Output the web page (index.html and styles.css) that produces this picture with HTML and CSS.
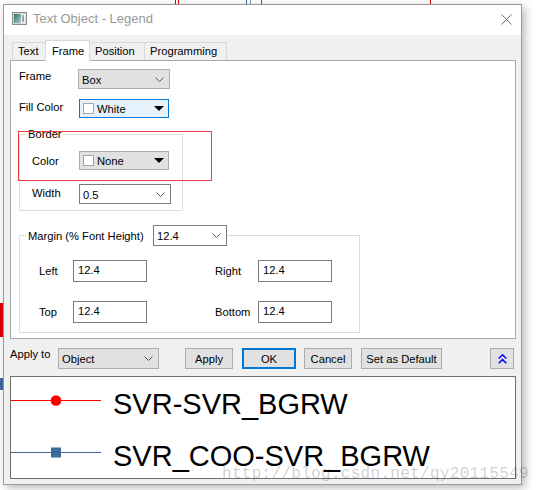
FILE: index.html
```html
<!DOCTYPE html>
<html>
<head>
<meta charset="utf-8">
<link rel="stylesheet" href="styles.css">
</head>
<body>
<div class="bgmark bg-red-left"></div>
<div class="bgmark bg-blue-left"></div>
<div class="bgmark bg-top-red1"></div>
<div class="bgmark bg-top-red2"></div>
<div class="bgmark bg-top-blue1"></div>
<div class="bgmark bg-top-gray"></div>
<div class="bgmark bg-top-blue2"></div>
<div class="bgmark bg-top-red3"></div>

<div class="window">
  <div class="titlebar">
    <svg class="app-icon" width="15" height="13" viewBox="0 0 15 13">
      <defs>
        <linearGradient id="ig" x1="0" y1="0" x2="1" y2="1">
          <stop offset="0" stop-color="#2f6f73"/>
          <stop offset="1" stop-color="#a6d3c2"/>
        </linearGradient>
      </defs>
      <rect x="0.5" y="0.5" width="14" height="12" fill="#d6d6d6" stroke="#8d8d8d"/>
      <rect x="2" y="2" width="7" height="9" fill="url(#ig)"/>
      <rect x="9" y="2" width="4" height="9" fill="#f6f6f6"/>
      <rect x="10.5" y="3" width="1" height="7" fill="#44515e"/>
    </svg>
    <span class="title">Text Object - Legend</span>
    <svg class="close" width="11" height="11" viewBox="0 0 11 11">
      <path d="M0.5 0.5 L10.5 10.5 M10.5 0.5 L0.5 10.5" stroke="#6f6f6f" stroke-width="1" fill="none"/>
    </svg>
  </div>

  <div class="body">
    <div class="tabs">
      <div class="tab tab-text">Text</div>
      <div class="tab tab-frame active">Frame</div>
      <div class="tab tab-pos">Position</div>
      <div class="tab tab-prog">Programming</div>
    </div>

    <div class="panel">
      <div class="row r-frame">
        <span class="lbl">Frame</span>
        <div class="combo gray c-frame">
          <span class="val">Box</span>
          <svg class="chev" width="9" height="5" viewBox="0 0 9 5"><path d="M0.5 0.5 L4.5 4.5 L8.5 0.5" stroke="#5a5a5a" fill="none"/></svg>
        </div>
      </div>

      <div class="row r-fill">
        <span class="lbl">Fill Color</span>
        <div class="combo focus c-color">
          <span class="swatch"></span>
          <span class="val">White</span>
          <svg class="tri" width="10" height="5" viewBox="0 0 10 5"><path d="M0 0 L10 0 L5 5 Z" fill="#000"/></svg>
        </div>
      </div>

      <fieldset class="group g-border">
        <legend>Border</legend>
        <div class="ginner">
          <div class="row r-color">
            <span class="lbl">Color</span>
            <div class="combo gray c-color">
              <span class="swatch"></span>
              <span class="val">None</span>
              <svg class="tri" width="10" height="5" viewBox="0 0 10 5"><path d="M0 0 L10 0 L5 5 Z" fill="#000"/></svg>
            </div>
          </div>
          <div class="row r-width">
            <span class="lbl">Width</span>
            <div class="combo white c-width">
              <span class="val">0.5</span>
              <svg class="chev" width="9" height="5" viewBox="0 0 9 5"><path d="M0.5 0.5 L4.5 4.5 L8.5 0.5" stroke="#5a5a5a" fill="none"/></svg>
            </div>
          </div>
        </div>
      </fieldset>

      <fieldset class="group g-margin">
        <legend>
          <span class="leg-text">Margin (% Font Height)</span>
          <div class="combo white c-marg">
            <span class="val">12.4</span>
            <svg class="chev" width="9" height="5" viewBox="0 0 9 5"><path d="M0.5 0.5 L4.5 4.5 L8.5 0.5" stroke="#5a5a5a" fill="none"/></svg>
          </div>
        </legend>
        <div class="mgrid">
          <span class="lbl">Left</span>
          <div class="edit">12.4</div>
          <span class="spacer"></span>
          <span class="lbl">Right</span>
          <div class="edit">12.4</div>
          <span class="lbl">Top</span>
          <div class="edit">12.4</div>
          <span class="spacer"></span>
          <span class="lbl">Bottom</span>
          <div class="edit">12.4</div>
        </div>
      </fieldset>
    </div>

    <div class="actions">
      <span class="lbl apply-lbl">Apply to</span>
      <div class="combo gray c-object">
        <span class="val">Object</span>
        <svg class="chev" width="9" height="5" viewBox="0 0 9 5"><path d="M0.5 0.5 L4.5 4.5 L8.5 0.5" stroke="#5a5a5a" fill="none"/></svg>
      </div>
      <div class="btn b-apply">Apply</div>
      <div class="btn b-ok">OK</div>
      <div class="btn b-cancel">Cancel</div>
      <div class="btn b-default">Set as Default</div>
      <div class="btn b-collapse">
        <svg width="9" height="10" viewBox="0 0 9 10"><path d="M0.7 4.5 L4.5 0.8 L8.3 4.5 M0.7 9.3 L4.5 5.6 L8.3 9.3" stroke="#0000ff" stroke-width="1.5" fill="none"/></svg>
      </div>
    </div>

    <div class="legend-box">
      <div class="lrow">
        <svg class="sym" width="90" height="32" viewBox="0 0 90 32">
          <line x1="0" y1="12.5" x2="90" y2="12.5" stroke="#ff0000" stroke-width="1.2"/>
          <circle cx="45" cy="12.5" r="5.3" fill="#ff0000"/>
        </svg>
        <span class="ltext">SVR-SVR_BGRW</span>
      </div>
      <div class="lrow lrow2">
        <svg class="sym" width="90" height="32" viewBox="0 0 90 32">
          <line x1="0" y1="12.5" x2="90" y2="12.5" stroke="#3d6a9c" stroke-width="1.2"/>
          <rect x="40" y="7.5" width="10" height="10" fill="#3d6a9c"/>
        </svg>
        <span class="ltext">SVR_COO-SVR_BGRW</span>
      </div>
    </div>
  </div>

  <div class="annot"></div>
  <div class="watermark">http://blog.csdn.net/qy20115549</div>
</div>
</body>
</html>
```

FILE: styles.css
```css
html, body {
  margin: 0;
}
body {
  position: relative;
  box-sizing: border-box;
  width: 541px;
  height: 490px;
  padding: 4px 0 0 3px;
  overflow: hidden;
  background: #ffffff;
  font-family: "Liberation Sans", Arial, sans-serif;
  font-size: 11.2px;
  color: #000;
}

/* bits of the plot window behind the dialog */
.bgmark { position: absolute; }
.bg-red-left { left: 0; top: 303px; width: 3px; height: 34px; background: #e60000; }
.bg-blue-left { left: 0; top: 378px; width: 3px; height: 12px; background: #3d6a9c; }
.bg-top-red1 { left: 175px; top: 0; width: 1px; height: 4px; background: #e00000; }
.bg-top-red2 { left: 178px; top: 0; width: 1px; height: 4px; background: #e00000; }
.bg-top-blue1 { left: 246px; top: 0; width: 1px; height: 4px; background: #3d6a9c; }
.bg-top-gray { left: 250px; top: 0; width: 1px; height: 4px; background: #9a9a9a; }
.bg-top-blue2 { left: 261px; top: 0; width: 1px; height: 4px; background: #3d6a9c; }
.bg-top-red3 { left: 430px; top: 0; width: 1px; height: 4px; background: #e00000; }

.window {
  position: relative;
  box-sizing: border-box;
  width: 519px;
  height: 481px;
  border: 1px solid #9b9b9b;
  background: #f0f0f0;
  box-shadow: 3px 3px 9px rgba(0, 0, 0, 0.28);
}

.titlebar {
  display: flex;
  align-items: flex-start;
  height: 30px;
  padding-left: 8px;
  background: #ffffff;
}
.app-icon { margin-top: 7px; flex: none; }
.title {
  margin: 6px 0 0 6px;
  font-size: 13px;
  line-height: 16px;
  color: #999999;
}
.close { margin: 9px 9px 0 auto; flex: none; }

.body {
  padding: 5px 5px 0 6px;
}

.tabs {
  display: flex;
  align-items: flex-end;
  height: 21px;
  margin-left: 2px;
}
.tab {
  box-sizing: border-box;
  height: 18px;
  margin-bottom: 1px;
  margin-left: -1px;
  padding: 1px 0 0 5px;
  border: 1px solid #d9d9d9;
  border-bottom: none;
  background: #f0f0f0;
  line-height: 14px;
  white-space: nowrap;
}
.tab-text { margin-left: 0; width: 34px; }
.tab-frame { width: 45px; }
.tab-pos { width: 56px; }
.tab-prog { width: 83px; }
.tab.active {
  position: relative;
  z-index: 1;
  height: 21px;
  margin-bottom: 0;
  padding: 3px 0 0 6px;
  background: #ffffff;
}

.panel {
  box-sizing: border-box;
  width: 506px;
  height: 279px;
  margin-top: -1px;
  padding: 8px 0 0 8px;
  border: 1px solid #a9a9a9;
  background: #ffffff;
}

.row {
  display: flex;
  align-items: flex-start;
}
.lbl {
  line-height: 14px;
  white-space: nowrap;
}

.combo {
  box-sizing: border-box;
  display: flex;
  align-items: center;
  padding-left: 3px;
  border: 1px solid #adadad;
  background: #e1e1e1;
  line-height: 14px;
  white-space: nowrap;
}
.combo .val { padding-top: 1px; }
.combo.white { border-color: #7a7a7a; background: #ffffff; }
.combo.focus { border-color: #0078d7; background: #e5f1fb; }
.chev { margin: 0 5px 0 auto; flex: none; }
.tri { margin: 0 4px 0 auto; flex: none; }
.swatch {
  box-sizing: border-box;
  width: 11px;
  height: 11px;
  margin-right: 3px;
  border: 1px solid #a6a6a6;
  background: #ffffff;
  flex: none;
}

.r-frame .lbl { width: 59px; }
.c-frame { width: 92px; height: 20px; }

.r-fill { margin-top: 10px; }
.r-fill .lbl { width: 60px; padding-top: 1px; }
.c-color { width: 90px; height: 19px; }

.group {
  box-sizing: border-box;
  margin: 0;
  padding: 0;
  border: 1px solid #dcdcdc;
  min-width: 0;
}
.group legend {
  margin-left: 6px;
  padding: 0 2px;
  line-height: 14px;
}

.g-border {
  width: 164px;
  margin-top: 9px;
  padding-bottom: 6px;
}
.g-border .ginner { padding: 10px 0 0 12px; }
.r-color .lbl { width: 47px; padding-top: 3px; }
.r-width { margin-top: 14px; }
.r-width .lbl { width: 47px; padding-top: 2px; }
.c-width { width: 92px; height: 20px; }

.g-margin {
  width: 341px;
  margin-top: 14px;
  padding-bottom: 9px;
}
.g-margin legend {
  display: flex;
  align-items: center;
  padding: 0 0 0 2px;
}
.leg-text { width: 125px; white-space: nowrap; }
.c-marg { width: 74px; height: 21px; }

.mgrid {
  display: grid;
  grid-template-columns: 34px 74px 68px 43px 74px;
  grid-auto-rows: 22px;
  row-gap: 19px;
  margin: 14px 0 0 19px;
}
.mgrid .lbl { padding-top: 4px; }
.edit {
  box-sizing: border-box;
  padding: 2px 0 0 4px;
  border: 1px solid #7a7a7a;
  background: #ffffff;
  line-height: 14px;
}

.actions {
  display: flex;
  align-items: flex-start;
  height: 21px;
  margin-top: 9px;
}
.apply-lbl { width: 48px; margin-top: -1px; }
.c-object { width: 101px; height: 21px; }
.btn {
  box-sizing: border-box;
  display: flex;
  align-items: center;
  justify-content: center;
  height: 21px;
  border: 1px solid #adadad;
  background: #e1e1e1;
  line-height: 14px;
  white-space: nowrap;
}
.b-apply { width: 48px; margin-left: 26px; }
.b-ok { width: 54px; margin-left: 9px; border: 2px solid #0078d7; }
.b-cancel { width: 48px; margin-left: 8px; }
.b-default { width: 81px; margin-left: 9px; }
.b-collapse { width: 24px; margin-left: 48px; }

.legend-box {
  box-sizing: border-box;
  width: 506px;
  height: 103px;
  margin-top: 7px;
  padding-top: 11px;
  border: 1px solid #6e6e6e;
  background: #ffffff;
}
.lrow {
  display: flex;
  align-items: flex-start;
  height: 32px;
}
.lrow2 { margin-top: 20px; }
.sym { flex: none; }
.ltext {
  margin-left: 12px;
  font-size: 29px;
  line-height: 32px;
  white-space: nowrap;
}

.annot {
  position: absolute;
  left: 14px;
  top: 126px;
  box-sizing: border-box;
  width: 194px;
  height: 50px;
  border: 1px solid #e8403a;
}

.watermark {
  position: absolute;
  left: 218px;
  top: 461px;
  font-family: "Liberation Mono", "Courier New", monospace;
  font-size: 16px;
  line-height: 16px;
  letter-spacing: 0.3px;
  color: rgba(0, 0, 0, 0.2);
  white-space: nowrap;
}
```
